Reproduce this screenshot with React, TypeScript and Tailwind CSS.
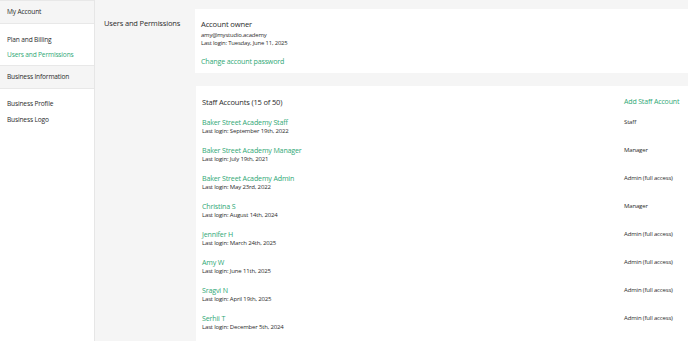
import React from 'react';

interface StaffAccount {
    name: string;
    lastLogin: string;
    role: string;
}

const staff: StaffAccount[] = [
    { name: 'Baker Street Academy Staff', lastLogin: 'September 19th, 2022', role: 'Staff' },
    { name: 'Baker Street Academy Manager', lastLogin: 'July 19th, 2021', role: 'Manager' },
    { name: 'Baker Street Academy Admin', lastLogin: 'May 23rd, 2022', role: 'Admin (full access)' },
    { name: 'Christina S', lastLogin: 'August 14th, 2024', role: 'Manager' },
    { name: 'Jennifer H', lastLogin: 'March 24th, 2025', role: 'Admin (full access)' },
    { name: 'Amy W', lastLogin: 'June 11th, 2025', role: 'Admin (full access)' },
    { name: 'Sragvi N', lastLogin: 'April 19th, 2025', role: 'Admin (full access)' },
    { name: 'Serhii T', lastLogin: 'December 5th, 2024', role: 'Admin (full access)' },
];

const SectionHeader: React.FC<{ label: string }> = ({ label }) => (
    <div className="h-[24px] flex items-center pl-[7px] bg-[#f5f5f5] border-y border-[#e8e8e8] text-[6.6px] text-[#2b2b2b]">
        {label}
    </div>
);

const Sidebar: React.FC = () => (
    <aside className="w-[95px] shrink-0 bg-white border-r border-[#e6e6e6] min-h-[341px]">
        <SectionHeader label="My Account" />
        <div className="pt-[11px] pb-[5px] pl-[7px] text-[6.6px] leading-[10px] text-[#2b2b2b] space-y-[5px]">
            <p>Plan and Billing</p>
            <p className="text-[#2fa876]">Users and Permissions</p>
        </div>
        <SectionHeader label="Business Information" />
        <div className="pt-[10px] pl-[7px] text-[6.6px] leading-[10px] text-[#2b2b2b] space-y-[6px]">
            <p>Business Profile</p>
            <p>Business Logo</p>
        </div>
    </aside>
);

export default function App() {
    return (
        <div className="flex w-[688px] h-[341px] overflow-hidden bg-[#f5f5f5] font-['Open_Sans',sans-serif] text-[#2b2b2b] tracking-[-0.01em]">
            <Sidebar />

            <div className="w-[100px] shrink-0 pl-[9px] pt-[17px]">
                <h1 className="text-[7.5px] leading-[12px] whitespace-nowrap">Users and Permissions</h1>
            </div>

            <main className="flex-1 pt-[9px] flex flex-col gap-[13px]">
                {/* Account owner */}
                <section className="bg-white pl-[6px] pt-[9px] pb-[6px]">
                    <h2 className="text-[7.6px] leading-[12px]">Account owner</h2>
                    <p className="mt-[1px] text-[5.9px] leading-[8px]">amy@mystudio.academy</p>
                    <p className="text-[5.9px] leading-[8px]">Last login: Tuesday, June 11, 2025</p>
                    <p className="mt-[9px] text-[7.1px] leading-[11px] text-[#2fa876]">Change account password</p>
                </section>

                {/* Staff accounts */}
                <section className="flex-1 bg-white ml-[1px] pl-[6px] pr-[8px] pt-[10px]">
                    <div className="flex items-center justify-between mb-[9px]">
                        <h2 className="text-[7.5px] leading-[12px]">Staff Accounts (15 of 50)</h2>
                        <span className="w-[56px] text-[7px] leading-[12px] text-[#2fa876] whitespace-nowrap">Add Staff Account</span>
                    </div>
                    {staff.map((s) => (
                        <div key={s.name} className="flex justify-between mb-[10px]">
                            <div>
                                <p className="text-[7.1px] leading-[10px] text-[#2fa876]">{s.name}</p>
                                <p className="text-[6px] leading-[8px]">Last login: {s.lastLogin}</p>
                            </div>
                            <span className="w-[56px] text-[6px] leading-[10px] whitespace-nowrap">{s.role}</span>
                        </div>
                    ))}
                </section>
            </main>
        </div>
    );
}
